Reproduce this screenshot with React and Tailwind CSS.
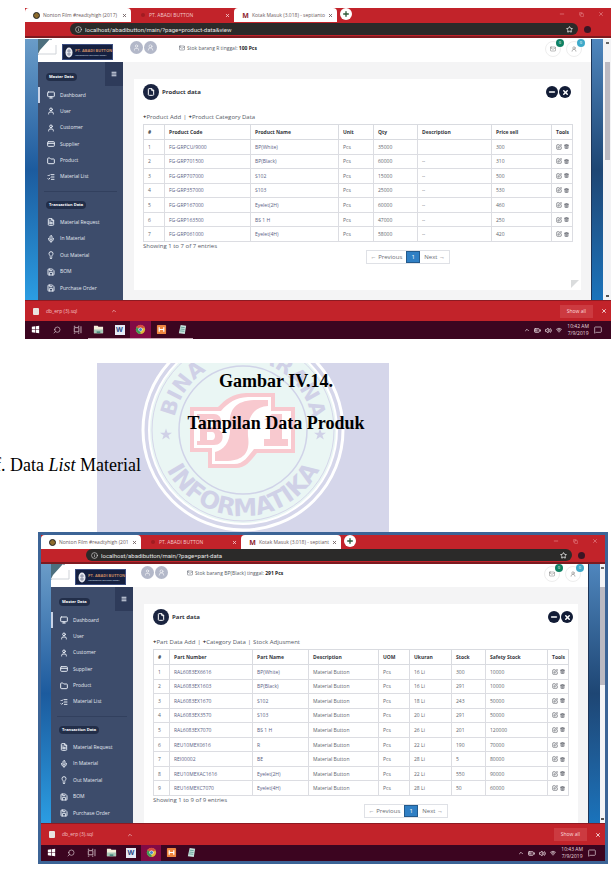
import React from "react";
import {
  Monitor, User, CreditCard, Folder, ListChecks, FileText, Mic, Lightbulb, Save, Menu,
  Minus, X, Plus, Star, Info, Copy, Mail, UserRound, ChevronUp, Search,
  BatteryMedium, Volume2, Wifi, MessageSquare, SquarePen, Trash2, File,
} from "lucide-react";

const MASTER = [
  ["Dashboard", Monitor],
  ["User", User],
  ["Customer", User],
  ["Supplier", CreditCard],
  ["Product", Folder],
  ["Material List", ListChecks],
];
const TRANSACTION = [
  ["Material Request", FileText],
  ["In Material", Mic],
  ["Out Material", Lightbulb],
  ["BOM", Save],
  ["Purchase Order", Save],
];

const PRODUCT = {
  id: "product",
  title: "Product data",
  url: "localhost/abadibutton/main/?page=product-data&view",
  stock: "Stok barang R tinggal:",
  stockCount: "100 Pcs",
  links: ["Product Add", "Product Category Data"],
  entries: "Showing 1 to 7 of 7 entries",
  download: "db_erp (3).sql",
  time: "10:42 AM",
  cols: ["w-[21px]", "w-[86px]", "w-[88px]", "w-[35px]", "w-[44px]", "w-[74px]", "w-[60px]", "w-[21px]"],
  head: ["#", "Product Code", "Product Name", "Unit", "Qty", "Description", "Price sell", "Tools"],
  rows: [
    ["1", "FG-GRPCU/9000", "BP(White)", "Pcs", "35000", "", "300"],
    ["2", "FG-GRP701500", "BP(Black)", "Pcs", "60000", "--", "310"],
    ["3", "FG-GRP707000", "S102", "Pcs", "15000", "--", "500"],
    ["4", "FG-GRP357000", "S103", "Pcs", "25000", "--", "530"],
    ["5", "FG-GRP167000", "Eyelet(2H)", "Pcs", "60000", "--", "460"],
    ["6", "FG-GRP163500", "BS 1 H", "Pcs", "47000", "--", "250"],
    ["7", "FG-GRP061000", "Eyelet(4H)", "Pcs", "58000", "--", "420"],
  ],
};

const PART = {
  id: "part",
  title: "Part data",
  url: "localhost/abadibutton/main/?page=part-data",
  stock: "Stok barang BP(Black) tinggal:",
  stockCount: "291 Pcs",
  links: ["Part Data Add", "Category Data", "Stock Adjusment"],
  entries: "Showing 1 to 9 of 9 entries",
  download: "db_erp (3).sql",
  time: "10:43 AM",
  cols: ["w-[16px]", "w-[83px]", "w-[56px]", "w-[70px]", "w-[31px]", "w-[42px]", "w-[34px]", "w-[62px]", "w-[21px]"],
  head: ["#", "Part Number", "Part Name", "Description", "UOM", "Ukuran", "Stock", "Safety Stock", "Tools"],
  rows: [
    ["1", "RAL6083EX6616", "BP(White)", "Material Button", "Pcs", "16 Li", "300", "10000"],
    ["2", "RAL6083EX1603", "BP(Black)", "Material Button", "Pcs", "16 Li", "291", "10000"],
    ["3", "RAL6083EX1670", "S102", "Material Button", "Pcs", "18 Li", "243", "50000"],
    ["4", "RAL6083EX3570", "S103", "Material Button", "Pcs", "20 Li", "291", "50000"],
    ["5", "RAL6083EX7070", "BS 1 H", "Material Button", "Pcs", "26 Li", "201", "120000"],
    ["6", "REU10MEX0616", "R", "Material Button", "Pcs", "22 Li", "190", "70000"],
    ["7", "REI00002", "BE", "Material Button", "Pcs", "28 Li", "5", "80000"],
    ["8", "REU10MEXAC1616", "Eyelet(2H)", "Material Button", "Pcs", "22 Li", "550", "90000"],
    ["9", "REU16MEXC7070", "Eyelet(4H)", "Material Button", "Pcs", "28 Li", "50", "60000"],
  ],
};

function Tab({ label, icon, active, first, narrow }) {
  const width = narrow ? "w-[100px]" : first ? "w-[106px]" : "w-[103px]";
  const tone = active ? "bg-[#c2232a] text-[#f3c9cb]" : "bg-white text-[#6b5a5c]";
  return (
    <div className={`flex h-[14px] shrink-0 items-center gap-[3px] rounded-t-sm pr-1 pl-2 ${width} ${tone}`}>
      <span className="flex w-[7px] shrink-0 justify-center">{icon}</span>
      <span className="min-w-0 flex-1 whitespace-nowrap">{label}</span>
      <button aria-label={`Close ${label}`}><X size={5} strokeWidth={4} /></button>
    </div>
  );
}

function BrowserChrome({ data, narrow }) {
  return (
    <div className="bg-[#c2232a] text-[5px] leading-none">
      <div className={`flex items-start ${narrow ? "h-[14px]" : "h-[15px]"}`}>
        <Tab first narrow={narrow} label={narrow ? "Nonton Film #readtyhigh (201" : "Nonton Film #readtyhigh (2017)"} icon={<span className="h-[7px] w-[7px] rounded-full border border-[#222] bg-[#8c6b2c]" />} />
        <Tab active narrow={narrow} label="PT. ABADI BUTTON" icon={<span className="h-1 w-1 rounded-full bg-[#a01c22]" />} />
        <Tab narrow={narrow} label={narrow ? "Kotak Masuk (3.018) - septiant" : "Kotak Masuk (3.018) - septianto"} icon={<span className="text-[7px] font-bold text-[#8e2430]">M</span>} />
        <button aria-label="New tab" className="ml-[3px] flex h-3 w-3 items-center justify-center rounded-full bg-white text-[#2f5a3a]"><Plus size={8} strokeWidth={4} /></button>
        <div className="ml-auto flex h-3 items-center gap-[14px] pr-[7px] text-[#f0a5a8]">
          <button aria-label="Minimize"><Minus size={6} /></button>
          <button aria-label="Restore"><Copy size={5} /></button>
          <button aria-label="Close window"><X size={6} /></button>
        </div>
      </div>
      <div className="flex h-[15px] items-center border-b-2 border-[#7d1a20] pb-px">
        <div className="w-[45px] shrink-0" />
        <div className="flex h-3 min-w-0 flex-1 items-center gap-[3px] rounded-full bg-[#2b2a29] px-[5px] text-[#e6e6e6]">
          <Info size={7} className="shrink-0" />
          <input aria-label="Address" readOnly value={data.url} className="h-3 min-w-0 flex-1 bg-transparent font-[Roboto,sans-serif] text-[6px] outline-none" />
          <Star size={7} strokeWidth={3} className="shrink-0" />
        </div>
        <div className="flex w-[33px] shrink-0 items-center pl-[6px]"><span className="h-[7px] w-[7px] rounded-full bg-[#3a1524]" /></div>
      </div>
    </div>
  );
}

function MenuList({ items, tall, active }) {
  return (
    <ul className={`flex flex-col justify-between ${tall ? "h-[98px]" : "h-[82px]"}`}>
      {items.map(([label, Icon], i) => (
        <li key={label} className={`h-4 border-l-2 ${active && i === 0 ? "border-[#c9d3e6]" : "border-transparent"}`}>
          <a href="#" className="flex h-4 items-center gap-[5px] pl-[7px] text-[#e3e8f1]">
            <Icon size={8} strokeWidth={3} />
            {label}
          </a>
        </li>
      ))}
    </ul>
  );
}

function Sidebar({ narrow }) {
  return (
    <nav className={`shrink-0 bg-[#3d4c6b] text-[5px] leading-none ${narrow ? "w-[82px] pb-[2px]" : "w-[85px] pb-1"}`}>
      <div className="flex h-[25px] items-start justify-between">
        <h2 className="mt-[11px] ml-2 rounded-full bg-[#222e49] px-[3px] py-[2px] text-[4px] font-bold text-white">Master Data</h2>
        <button aria-label="Toggle menu" className="flex h-6 w-[18px] items-center justify-center bg-[#2e3b5a] text-[#dde3ef]"><Menu size={6} strokeWidth={4} /></button>
      </div>
      <MenuList items={MASTER} tall active />
      <div className="mx-[6px] mt-[6px] mb-[9px] h-px bg-[#32405e]" />
      <div className="mb-[5px] ml-2 flex"><h2 className="rounded-full bg-[#222e49] px-[3px] py-[2px] text-[4px] font-bold text-white">Transaction Data</h2></div>
      <MenuList items={TRANSACTION} />
    </nav>
  );
}

function AppHeader({ data, narrow }) {
  return (
    <header className={`flex h-[23px] bg-white text-[5px] leading-none text-[#555b66] ${narrow ? "pr-[7px]" : "pr-[9px]"}`}>
      <svg viewBox="0 0 20 23" className="h-[23px] w-5 shrink-0">
        <path d="M0 0H14L0 16Z" fill="#4d6f7e" />
        <path d="M12 0C14 2 15 5 18 6V15H0L2 11Z" fill="#fff" />
        <path d="M18 6V15H0" fill="none" stroke="#cfd3d8" strokeWidth="1" />
      </svg>
      <div className="mt-[5px] ml-1 flex h-4 w-[51px] shrink-0 items-center gap-[2px] border border-[#3b4d80] bg-[#152040] pl-[2px]">
        <svg viewBox="0 0 8 11" className="h-[11px] w-2 shrink-0">
          <ellipse cx="4" cy="5.500" rx="3.500" ry="5" fill="#e8e9ee" />
          <path d="M4 2V9M2 4H6M2 7H6" stroke="#777f98" strokeWidth=".8" />
        </svg>
        <div className="whitespace-nowrap">
          <div className="text-[4px] leading-[6px] font-bold text-[#c98a62]">PT. ABADI BUTTON</div>
          <div className="text-[2px] leading-[3px] text-[#dfe4f3]">Manufacturing and supply factory</div>
        </div>
      </div>
      <div className={`mt-[2px] flex gap-px text-white ${narrow ? "ml-[15px]" : "ml-[17px]"}`}>
        <button aria-label="Profile" className="flex h-[13px] w-[13px] items-center justify-center rounded-full bg-[#b3b8c9]"><User size={7} /></button>
        <button aria-label="Account" className="flex h-[13px] w-[13px] items-center justify-center rounded-full bg-[#b3b8c9]"><UserRound size={7} /></button>
      </div>
      <p className={`mt-[5px] flex h-2 items-center gap-[2px] whitespace-nowrap ${narrow ? "ml-[19px]" : "ml-[22px]"}`}>
        <Mail size={6} />
        <span>{data.stock} <b className="text-[#222]">{data.stockCount}</b></span>
      </p>
      <div className="ml-auto flex gap-[5px] pt-[2px]">
        {[["Messages", Mail, "bg-[#0f8163]"], ["Alerts", UserRound, "bg-[#3ea9c9]"]].map(([name, Icon, tone]) => (
          <button key={name} aria-label={name} className="relative flex h-4 w-4 items-center justify-center rounded-full border border-[#eeeeee] text-[#777]">
            <Icon size={6} strokeWidth={2} />
            <span className={`absolute -top-[3px] -right-1 flex h-2 w-2 items-center justify-center rounded-full text-[4px] text-white ${tone}`}>0</span>
          </button>
        ))}
      </div>
    </header>
  );
}

function DataTable({ data, tall }) {
  return (
    <table className={`w-full table-fixed border-collapse text-left text-[5px] leading-[6px] text-[#62666e] ${tall ? "h-[147px]" : "h-[118px]"}`}>
      <colgroup>{data.cols.map((c, i) => <col key={i} className={c} />)}</colgroup>
      <thead>
        <tr className="h-[15px] border-b border-[#c6c8ce]">
          {data.head.map((h) => <th key={h} className="border border-[#d9dbe0] pl-1 font-bold whitespace-nowrap text-[#34373d]">{h}</th>)}
        </tr>
      </thead>
      <tbody>
        {data.rows.map((row) => (
          <tr key={row[0]}>
            {row.map((cell, i) => (
              <td key={i} className="border border-[#dcdde2] pl-1 whitespace-nowrap">
                {i === 1 || i === 2 ? <a href="#" className="text-[#5a6285]">{cell}</a> : cell}
              </td>
            ))}
            <td className="border border-[#dcdde2] pl-1">
              <span className="flex gap-[2px] text-[#6d7078]">
                <button aria-label={`Edit row ${row[0]}`}><SquarePen size={6} strokeWidth={3} /></button>
                <button aria-label={`Delete row ${row[0]}`}><Trash2 size={5} strokeWidth={4} /></button>
              </span>
            </td>
          </tr>
        ))}
      </tbody>
    </table>
  );
}

function Card({ data, narrow }) {
  return (
    <section className="flex flex-1 flex-col bg-white pt-[5px] pl-[9px] text-[6px] leading-none text-[#555b66]">
      <div className={narrow ? "pr-[9px]" : "pr-[10px]"}>
        <div className="flex items-center">
          <span className="flex h-4 w-4 items-center justify-center rounded-full bg-[#1a2440] text-white"><File size={8} strokeWidth={3} /></span>
          <h1 className="ml-[3px] text-[6px] font-bold text-[#33363d]">{data.title}</h1>
          <div className={`ml-auto flex gap-px text-white ${narrow ? "-mr-1" : ""}`}>
            <button aria-label="Collapse" className="flex h-3 w-3 items-center justify-center rounded-full bg-[#121c36]"><Minus size={8} strokeWidth={5} /></button>
            <button aria-label="Close panel" className="flex h-3 w-3 items-center justify-center rounded-full bg-[#121c36]"><X size={7} strokeWidth={5} /></button>
          </div>
        </div>
        <p className="mt-[13px] mb-[3px] flex h-2 items-center gap-[2px] whitespace-nowrap">
          {data.links.map((l, i) => (
            <React.Fragment key={l}>
              {i > 0 && <span>|</span>}
              <a href="#">{i < 2 && <b className="text-[#222]">+</b>}{l}</a>
            </React.Fragment>
          ))}
        </p>
        <DataTable data={data} tall={narrow} />
        <p className="flex h-2 items-center">{data.entries}</p>
        <div className="mr-[121px] flex justify-end text-[#6a6d74]">
          <div className="flex h-[14px] items-stretch border border-[#dfe1e6]">
            <button className="px-1 whitespace-nowrap">← Previous</button>
            <button className="w-[14px] border border-[#235a8c] bg-[#2f7fc4] text-white">1</button>
            <button className="px-1 whitespace-nowrap">Next →</button>
          </div>
        </div>
      </div>
      {!narrow && <svg viewBox="0 0 8 8" className="mt-auto mr-[2px] mb-[2px] h-2 w-2 self-end"><path d="M0 0H8L0 8Z" fill="#dadcdd" /></svg>}
    </section>
  );
}

function TaskIcon({ kind }) {
  const s = "h-[11px] w-[11px]";
  switch (kind) {
    case "Start":
      return <svg viewBox="0 0 12 12" className={s}><path d="M2 3L5.500 2.500V5.700H2ZM6.200 2.400L10 2V5.700H6.200ZM2 6.400H5.500V9.500L2 9ZM6.200 6.400H10V10L6.200 9.600Z" fill="#fff" /></svg>;
    case "Search":
      return <Search size={8} className="-scale-x-100 text-[#d9c7cf]" />;
    case "Task view":
      return <svg viewBox="0 0 12 12" className={s}><path d="M2.500 4H7.500V8.500H2.500ZM2 2.500H3.500M6.500 2.500H8M2 10H3.500M6.500 10H8M9.800 2.500V10" fill="none" stroke="#d9c7cf" strokeWidth=".9" /></svg>;
    case "Explorer":
      return <svg viewBox="0 0 12 12" className={s}><path d="M1 2H5L6 3H11V10H1Z" fill="#f4efdb" /><path d="M1 6H11V10H1Z" fill="#a9c9b8" /><path d="M4 8H8V10H4Z" fill="#4b8a80" /></svg>;
    case "Word":
      return <span className="flex h-[10px] w-[10px] items-center justify-center bg-[#e6ebf5] text-[7px] font-bold text-[#2a4a86]">W</span>;
    case "Chrome":
      return <svg viewBox="0 0 12 12" className={s}><circle cx="6" cy="6" r="5" fill="#e0b83d" /><path d="M6 6L1.600 3.500A5 5 0 0 1 10.400 3.500Z" fill="#d84a3e" /><path d="M6 6L1.600 3.500A5 5 0 0 0 6 11Z" fill="#3d9a59" /><circle cx="6" cy="6" r="2.300" fill="#fff" /><circle cx="6" cy="6" r="1.700" fill="#4a83c8" /></svg>;
    case "XAMPP":
      return <svg viewBox="0 0 12 12" className={s}><rect x="1" y="1" width="10" height="10" rx="1" fill="#ee8540" /><path d="M3.500 3.500V8.500M8.500 3.500V8.500M3.500 6H8.500" stroke="#fff" strokeWidth="1.300" /></svg>;
    default:
      return <svg viewBox="0 0 12 12" className={s}><path d="M4 1L10 2L8.500 11L2 10Z" fill="#c8e3dd" /><path d="M4 3.500L8.500 4M3.700 5.500L8.200 6M3.400 7.500L8 8" stroke="#4f9387" strokeWidth=".8" /></svg>;
  }
}

const TASKS = ["Start", "Search", "Task view", "Explorer", "Word", "Chrome", "XAMPP", "Notepad"];

function BottomBars({ data, narrow }) {
  return (
    <div className="text-[5px] leading-none text-white">
      <div className={`flex items-center border-t border-[#8c1a22] bg-[#c2232a] pl-2 ${narrow ? "h-[22px]" : "h-[21px]"}`}>
        <span className="mr-[7px] h-[7px] w-[6px] rounded-[1px] bg-[#e9e4e0]" />
        <span className="w-[65px] text-[#f3c0c3]">{data.download}</span>
        <button aria-label="Download options"><ChevronUp size={6} /></button>
        <button className="ml-auto bg-[#cc3a40] px-[7px] py-1 text-[#fbdcdc]">Show all</button>
        <button aria-label="Close downloads" className="mr-1 ml-2"><X size={6} strokeWidth={3} /></button>
      </div>
      <div className={`flex items-stretch bg-[#3c0520] ${narrow ? "h-4" : "h-[18px]"}`}>
        {TASKS.map((t, i) => (
          <button key={t} aria-label={t} className={`flex items-center justify-center border-b ${narrow ? "w-5" : "w-[21px]"} ${t === "Chrome" ? "bg-[#820a45]" : ""} ${i > 2 && !narrow ? "border-[#c9a9b8]" : "border-transparent"}`}>
            <TaskIcon kind={t} />
          </button>
        ))}
        <div className="ml-auto flex items-center gap-1 pr-[9px] text-[#e6d8de]">
          <ChevronUp size={6} strokeWidth={3} /><BatteryMedium size={7} strokeWidth={3} /><Volume2 size={7} strokeWidth={3} /><Wifi size={6} strokeWidth={3} />
          <div className="mx-px text-center leading-[7px]"><div>{data.time}</div><div>7/9/2019</div></div>
          <MessageSquare size={8} />
        </div>
      </div>
    </div>
  );
}

function Screenshot({ data, narrow }) {
  return (
    <article className="font-['Open_Sans','Noto_Sans',sans-serif]">
      <BrowserChrome data={data} narrow={narrow} />
      <div className={`flex bg-white ${narrow ? "" : "pt-px"}`}>
        <div className={`shrink-0 bg-linear-to-b from-[#6a9cc8] via-[#1c5b9e] to-[#2b9de2] ${narrow ? "w-[10px]" : "w-[13px]"}`} />
        <div className="flex min-w-0 flex-1 flex-col">
          <AppHeader data={data} narrow={narrow} />
          <div className="flex flex-1 bg-[#f4f4f5]">
            <Sidebar narrow={narrow} />
            <main className={`flex min-w-0 flex-1 flex-col pt-[17px] pr-[10px] pl-[11px] ${narrow ? "" : "pb-[10px]"}`}>
              <Card data={data} narrow={narrow} />
            </main>
          </div>
        </div>
        <div className="w-3 shrink-0 border-l border-[#1d3558] bg-linear-to-b from-[#4f86bd] via-[#1e4674] to-[#1a73bb]" />
        <div className={`flex shrink-0 flex-col items-center bg-[#f3f3f5] ${narrow ? "w-[5px]" : "w-2"}`}>
          <span className="mt-[3px] h-[2px] w-[3px] bg-[#666]" />
          <span className="mt-[18px] h-[98px] w-[5px] bg-[#bcbac2]" />
          <span className="mt-auto mb-[3px] h-[2px] w-[3px] bg-[#555]" />
        </div>
      </div>
      <BottomBars data={data} narrow={narrow} />
    </article>
  );
}

function Seal() {
  return (
    <svg viewBox="97 363 292 169" className="absolute top-[3px] left-[97px] h-[169px] w-[292px]" fontFamily="DejaVu Sans, sans-serif" fontWeight="700">
      <defs>
        <path id="seal-top" d="M173.500 430A69.500 69.500 0 0 1 312.500 430" />
        <path id="seal-bottom" d="M157 430A86 86 0 0 0 329 430" />
      </defs>
      <rect x="97" y="363" width="292" height="169" fill="#d5d6ea" />
      <circle cx="243" cy="430" r="100" fill="#d5d6ea" stroke="#fff" strokeWidth="3" />
      <circle cx="243" cy="430" r="94" fill="#eaf6f4" stroke="#fff" strokeWidth="2" />
      <circle cx="243" cy="430" r="91" fill="none" stroke="#d5d6ea" strokeWidth="1" />
      <circle cx="243" cy="430" r="64" fill="none" stroke="#d0d3e8" strokeWidth="1.500" />
      <g fill="#d0d1e7">
        <text fontSize="21"><textPath href="#seal-top" startOffset="6%">BINA</textPath></text>
        <text fontSize="21"><textPath href="#seal-top" startOffset="95%" textAnchor="end">SARANA</textPath></text>
        <text fontSize="24"><textPath href="#seal-bottom" startOffset="50%" textAnchor="middle">INFORMATIKA</textPath></text>
        <path id="star" d="M166 428.500L167.500 432.700H172L168.400 435.300L169.800 439.500L166 437L162.200 439.500L163.600 435.300L160 432.700H164.500Z" />
        <use href="#star" x="154" />
      </g>
      <path d="M190 407H218C226 399 232 394 246 393H275V407H295V453H257C251 460 246 468 236 468H208V452H190Z" fill="#f8c9cf" />
      <path d="M194 411H221C229 402 235 398 248 397H271V411H291V449H254C248 456 244 464 234 464H212V448H194Z" fill="#fff" />
      <path d="M268 400H254C233 401 229 412 230 426C231 442 224 450 215 452V461H228C246 460 250 450 248 436C247 416 254 407 268 406Z" fill="#f8c9cf" />
      <path fillRule="evenodd" d="M197 414H214C223 414 223 426 217 429C225 431 225 445 214 445H197V441H200V418H197ZM207 419V427H212C215 427 215 419 212 419ZM207 432V440H212C216 440 216 432 212 432Z" fill="#f8c9cf" />
      <path d="M264 420L272 414H282V439H288V446H264V439H270V420Z" fill="#f8c9cf" />
    </svg>
  );
}

export default function App() {
  return (
    <div className="w-full overflow-hidden bg-white pt-2 pb-2">
      <div className="mr-[3px] ml-[25px]">
        <Screenshot data={PRODUCT} />
      </div>
      <section className="relative mt-[21px] pb-[46px] font-['Liberation_Serif',serif] text-[18px] leading-[42px] text-black">
        <Seal />
        <div className="relative">
          <h2 className="pr-[62px] text-center font-bold">Gambar IV.14.</h2>
          <h2 className="pr-[62px] text-center font-bold">Tampilan Data Produk</h2>
          <p className="-ml-[5px]">f. Data <i>List</i> Material</p>
        </div>
      </section>
      <div className="mr-[6px] ml-[38px] border-[3px] border-[#3c6496]">
        <Screenshot data={PART} narrow />
      </div>
    </div>
  );
}
